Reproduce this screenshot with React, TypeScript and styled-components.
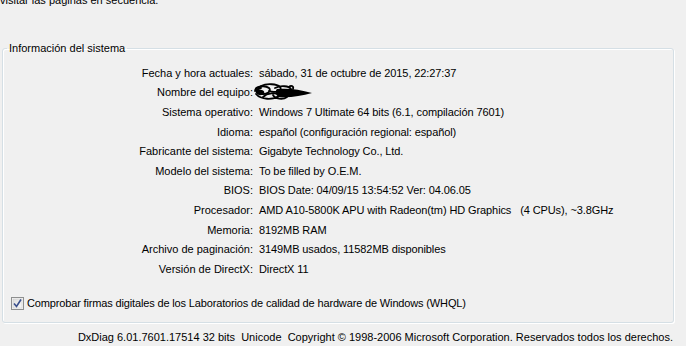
import React from 'react';
import styled, { createGlobalStyle } from 'styled-components';

const GlobalStyle = createGlobalStyle`
	body {
		margin: 0;
		background: #f0f0f0;
		font-family: 'Liberation Sans', Arial, sans-serif;
		font-size: 11px;
		color: #000;
	}
`;

const Page = styled.div`
	width: 686px;
	height: 346px;
	overflow: hidden;
	display: flex;
	flex-direction: column;
`;

const Intro = styled.div`
	margin-top: -6px;
	line-height: 13px;
	white-space: nowrap;
`;

const GroupBox = styled.fieldset`
	margin: 34px 12px 0 2px;
	padding: 0 0 12px;
	border: 1px solid #d5dfe5;
	border-radius: 3px;
	box-shadow: 1px 1px 0 #fff, inset 1px 1px 0 #fff;
	min-width: 0;
`;

const Legend = styled.legend`
	margin-left: 4px;
	padding: 0 2px;
	line-height: 14px;
`;

const InfoGrid = styled.div`
	display: grid;
	grid-template-columns: 250px 1fr;
	column-gap: 6px;
	grid-auto-rows: 19.6px;
	align-items: center;
	margin-top: 8px;
`;

const Label = styled.div`
	text-align: right;
	white-space: nowrap;
`;

const Value = styled.div`
	white-space: pre;
	display: flex;
	align-items: center;
	letter-spacing: -0.1px;
`;

const CheckRow = styled.label`
	display: flex;
	align-items: center;
	gap: 3px;
	margin: 18px 0 0 8px;
	letter-spacing: -0.15px;
`;

const Footer = styled.div`
	margin-top: 8px;
	padding-right: 13px;
	text-align: right;
	white-space: pre;
`;

const Scribble = styled.svg`
	margin-left: -6px;
	margin-top: -1px;
`;

const rows: [string, string][] = [
	['Fecha y hora actuales:', 'sábado, 31 de octubre de 2015, 22:27:37'],
	['Nombre del equipo:', ''],
	['Sistema operativo:', 'Windows 7 Ultimate 64 bits (6.1, compilación 7601)'],
	['Idioma:', 'español (configuración regional: español)'],
	['Fabricante del sistema:', 'Gigabyte Technology Co., Ltd.'],
	['Modelo del sistema:', 'To be filled by O.E.M.'],
	['BIOS:', 'BIOS Date: 04/09/15 13:54:52 Ver: 04.06.05'],
	['Procesador:', 'AMD A10-5800K APU with Radeon(tm) HD Graphics   (4 CPUs), ~3.8GHz'],
	['Memoria:', '8192MB RAM'],
	['Archivo de paginación:', '3149MB usados, 11582MB disponibles'],
	['Versión de DirectX:', 'DirectX 11'],
];

// scribbled-out computer name
function Blot() {
	return (
		<Scribble width="60" height="18" viewBox="0 0 60 18">
			<g fill="none" stroke="#000" strokeWidth="1.8" strokeLinecap="round">
				<path d="M2 8 C2 3 12 2 16 5 C19 8 14 12 8 11 C3 10 3 6 8 5" />
				<path d="M8 3 C14 0 24 1 27 4 C30 8 22 10 16 8" />
				<path d="M3 11 C8 17 20 17 26 13 C30 10 36 11 34 14 C30 17 22 16 20 12" />
				<path d="M22 5 C28 2 36 3 38 6 C40 9 32 11 28 9" />
				<path d="M10 14 C14 10 22 9 30 12" />
				<path d="M36 4 C38 2 41 3 40 6" />
			</g>
			<path d="M24 6 C34 5 46 6 59 10 C48 13 36 15 26 14 C22 12 22 8 24 6 Z" fill="#000" />
			<path d="M3 6 C1 9 4 13 9 12 C12 11 12 8 9 7" fill="#000" />
		</Scribble>
	);
}

function CheckBox() {
	return (
		<svg width="13" height="13" viewBox="0 0 13 13">
			<defs>
				<linearGradient id="cb" x1="0" y1="0" x2="1" y2="1">
					<stop offset="0" stopColor="#dcdcdc" />
					<stop offset="1" stopColor="#fbfbfb" />
				</linearGradient>
			</defs>
			<rect x="0.5" y="0.5" width="12" height="12" fill="#f4f4f4" stroke="#8e8f8f" />
			<rect x="2" y="2" width="9" height="9" fill="url(#cb)" stroke="#c6c6c6" strokeWidth="0.5" />
			<path d="M3 6.5 L5.5 9.5 L10 2.5" fill="none" stroke="#3a4f8c" strokeWidth="1.6" />
		</svg>
	);
}

export default function App() {
	return (
		<Page>
			<GlobalStyle />
			<Intro>visitar las páginas en secuencia.</Intro>
			<GroupBox>
				<Legend>Información del sistema</Legend>
				<InfoGrid>
					{rows.map(([label, value]) => (
						<React.Fragment key={label}>
							<Label>{label}</Label>
							<Value>{label === 'Nombre del equipo:' ? <Blot /> : value}</Value>
						</React.Fragment>
					))}
				</InfoGrid>
				<CheckRow>
					<CheckBox />
					Comprobar firmas digitales de los Laboratorios de calidad de hardware de Windows (WHQL)
				</CheckRow>
			</GroupBox>
			<Footer>DxDiag 6.01.7601.17514 32 bits  Unicode  Copyright © 1998-2006 Microsoft Corporation. Reservados todos los derechos.</Footer>
		</Page>
	);
}
